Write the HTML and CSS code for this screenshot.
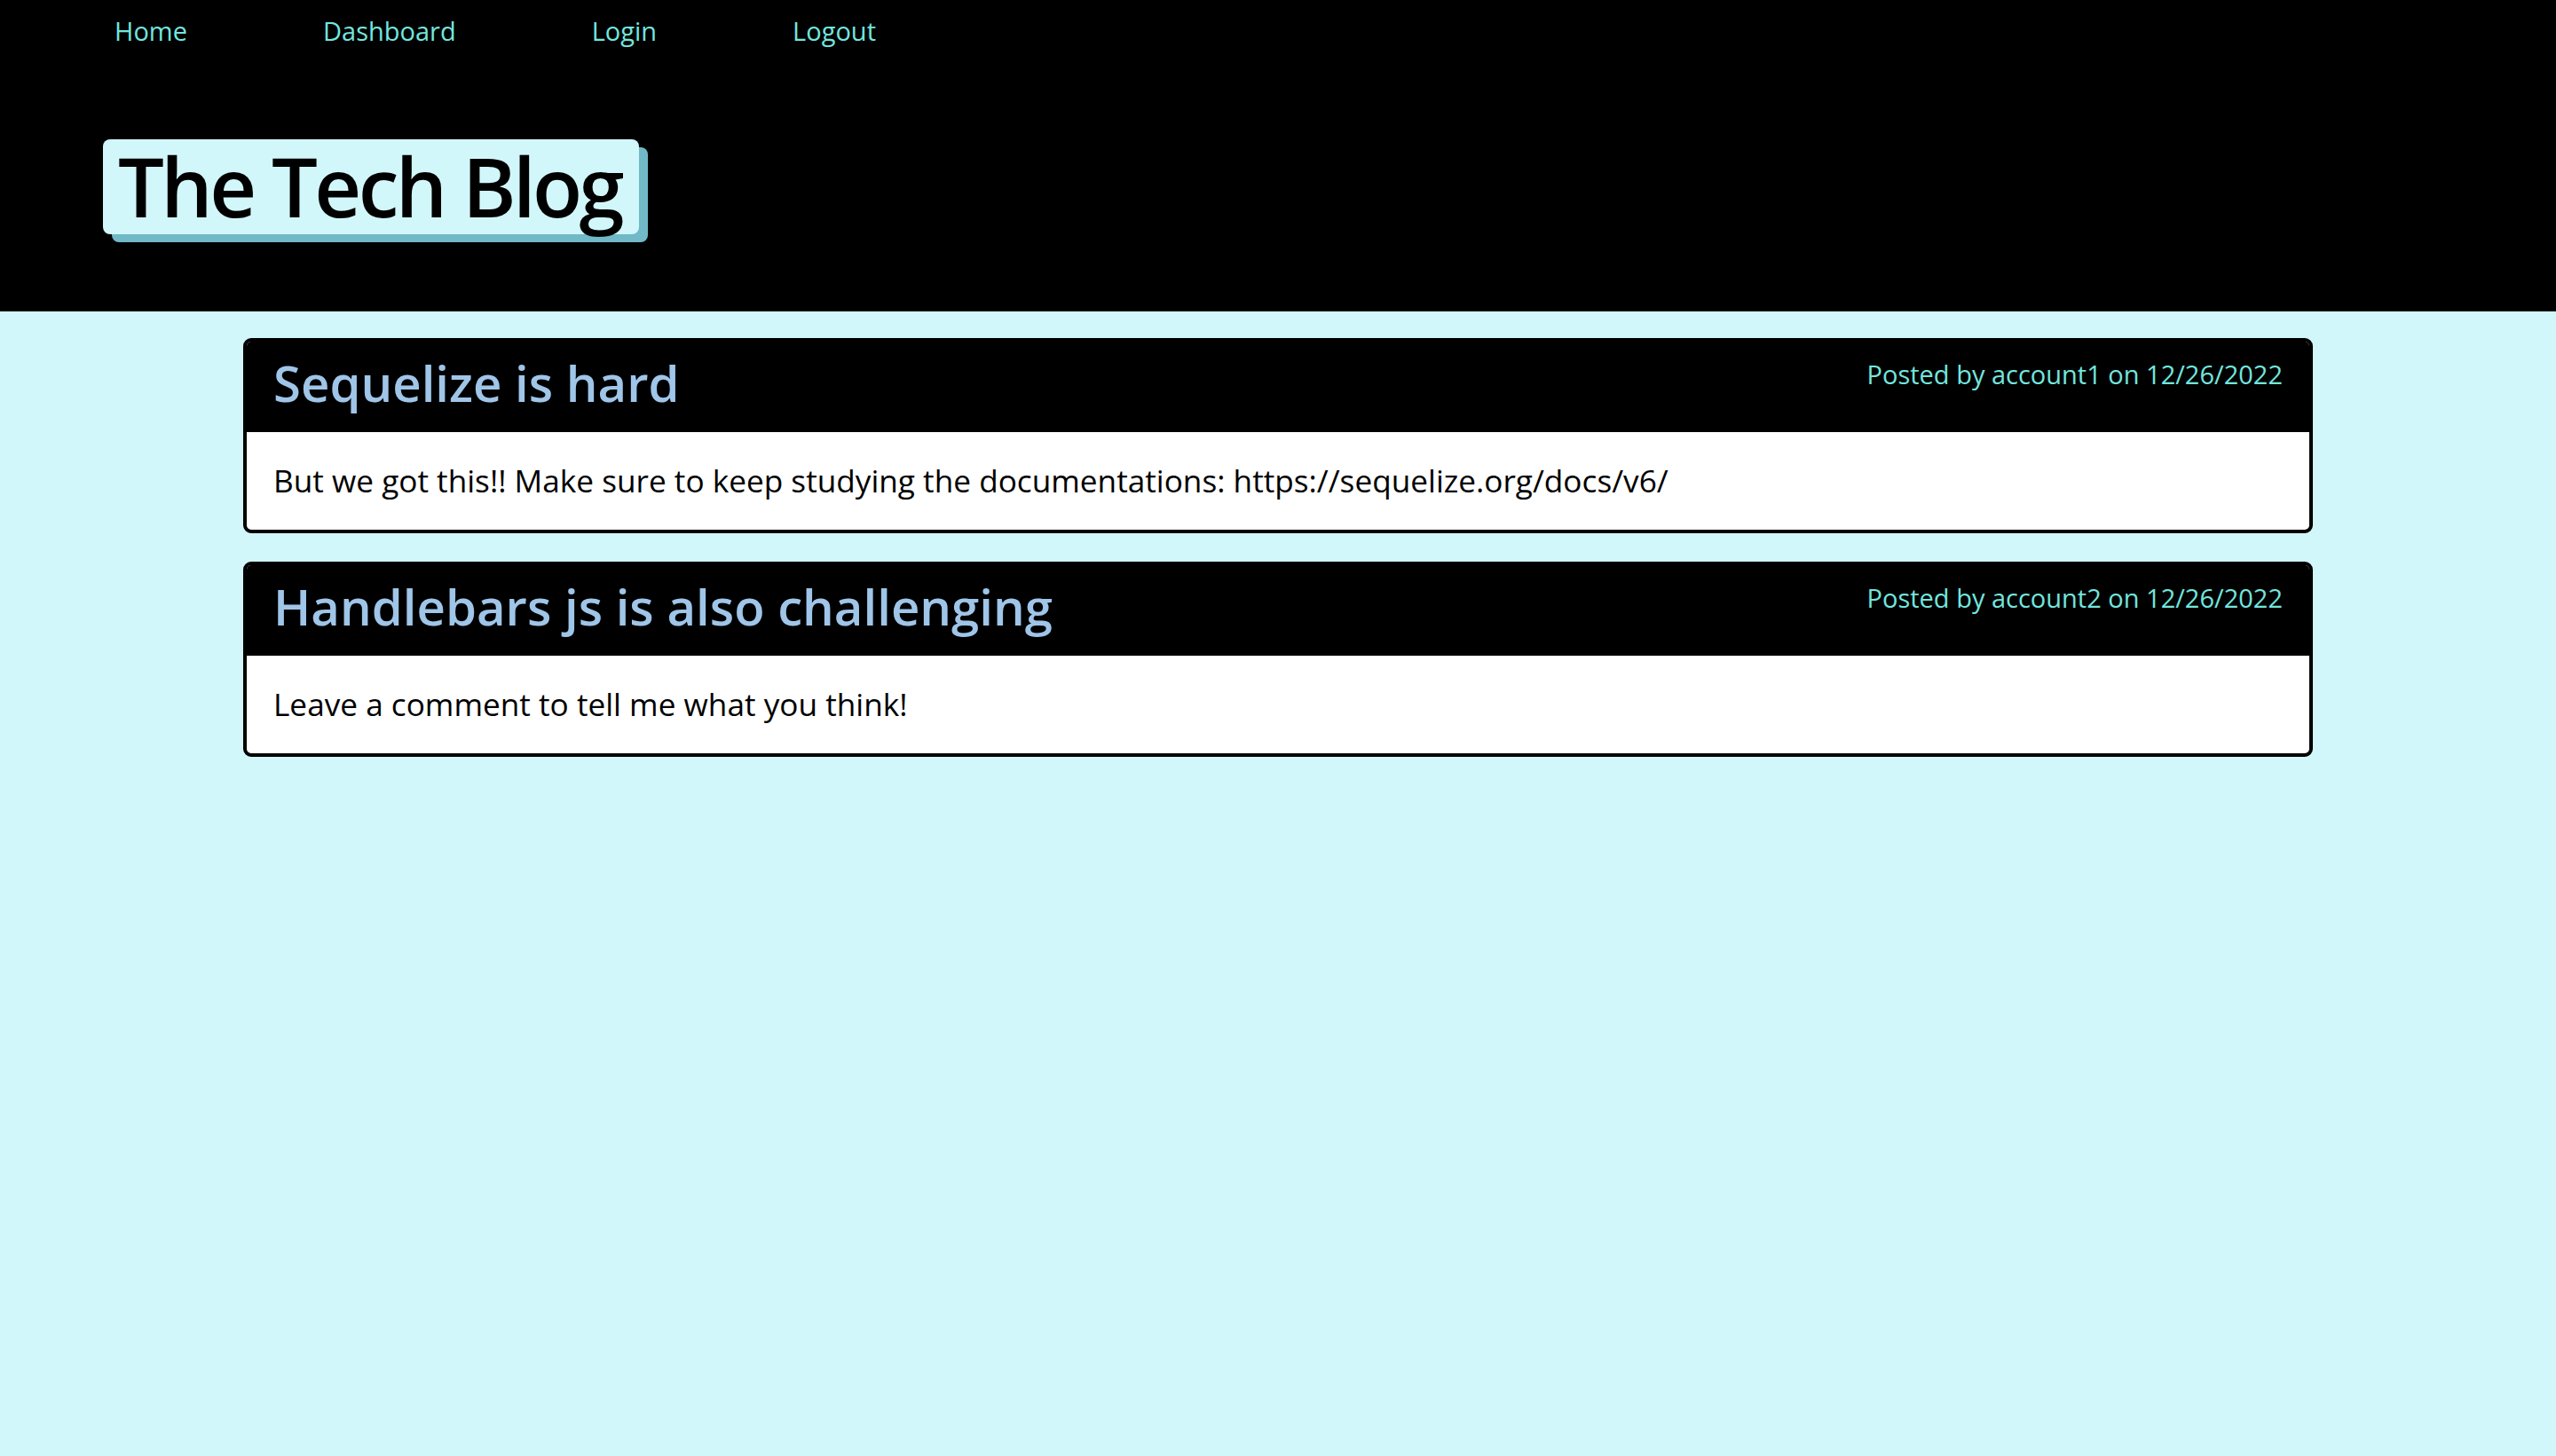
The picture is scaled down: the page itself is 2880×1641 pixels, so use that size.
FILE: index.html
```html
<!DOCTYPE html>
<html lang="en">
<head>
<meta charset="utf-8">
<title>The Tech Blog</title>
<link rel="stylesheet" href="styles.css">
</head>
<body>
<header class="site-header">
  <nav class="nav">
    <a class="nav-link" href="#">Home</a>
    <a class="nav-link" href="#">Dashboard</a>
    <a class="nav-link" href="#">Login</a>
    <a class="nav-link" href="#">Logout</a>
  </nav>
  <h1 class="site-title">The Tech Blog</h1>
</header>
<main class="posts">
  <article class="post">
    <div class="post-head">
      <h2 class="post-title">Sequelize is hard</h2>
      <p class="post-meta">Posted by account1 on 12/26/2022</p>
    </div>
    <div class="post-body">But we got this!! Make sure to keep studying the documentations: https://sequelize.org/docs/v6/</div>
  </article>
  <article class="post">
    <div class="post-head">
      <h2 class="post-title">Handlebars js is also challenging</h2>
      <p class="post-meta">Posted by account2 on 12/26/2022</p>
    </div>
    <div class="post-body">Leave a comment to tell me what you think!</div>
  </article>
</main>
</body>
</html>
```
FILE: styles.css
```css
* { box-sizing: border-box; }
html, body {
  margin: 0;
  padding: 0;
}
body {
  background: #d2f7fa;
  font-family: "Open Sans", "Noto Sans", sans-serif;
  min-height: 1641px;
}
.site-header {
  background: #000;
  padding: 15px 0 87px 0;
}
.nav {
  display: flex;
  gap: 153px;
  padding-left: 129px;
  line-height: 40px;
}
.nav-link {
  color: #72e6df;
  text-decoration: none;
  font-size: 29px;
}
.site-title {
  display: inline-block;
  margin: 102px 0 0 116px;
  padding: 5px 20px 6px 17px;
  background: #d2f7fa;
  color: #000;
  font-size: 92px;
  font-weight: 600;
  line-height: 96px;
  letter-spacing: -3.6px;
  border-radius: 8px;
  box-shadow: 10px 9px 0 #71b9c6;
}
.posts {
  width: 2332px;
  margin: 30px auto 0;
  display: flex;
  flex-direction: column;
  gap: 32px;
}
.post {
  background: #fff;
  border: 4px solid #000;
  border-radius: 9px;
}
.post-head {
  background: #000;
  border-radius: 5px 5px 0 0;
  display: flex;
  justify-content: space-between;
  align-items: flex-start;
  padding: 8px 30px 18px 30px;
}
.post-title {
  margin: 0;
  color: #9fc5e8;
  font-size: 56.3px;
  font-weight: 600;
  line-height: normal;
}
.post-meta {
  margin: 9px 0 0 0;
  color: #72e6df;
  font-size: 29px;
  line-height: normal;
}
.post-body {
  padding: 30px 30px 32px 30px;
  font-size: 35.2px;
  line-height: normal;
  color: #000;
}
```
